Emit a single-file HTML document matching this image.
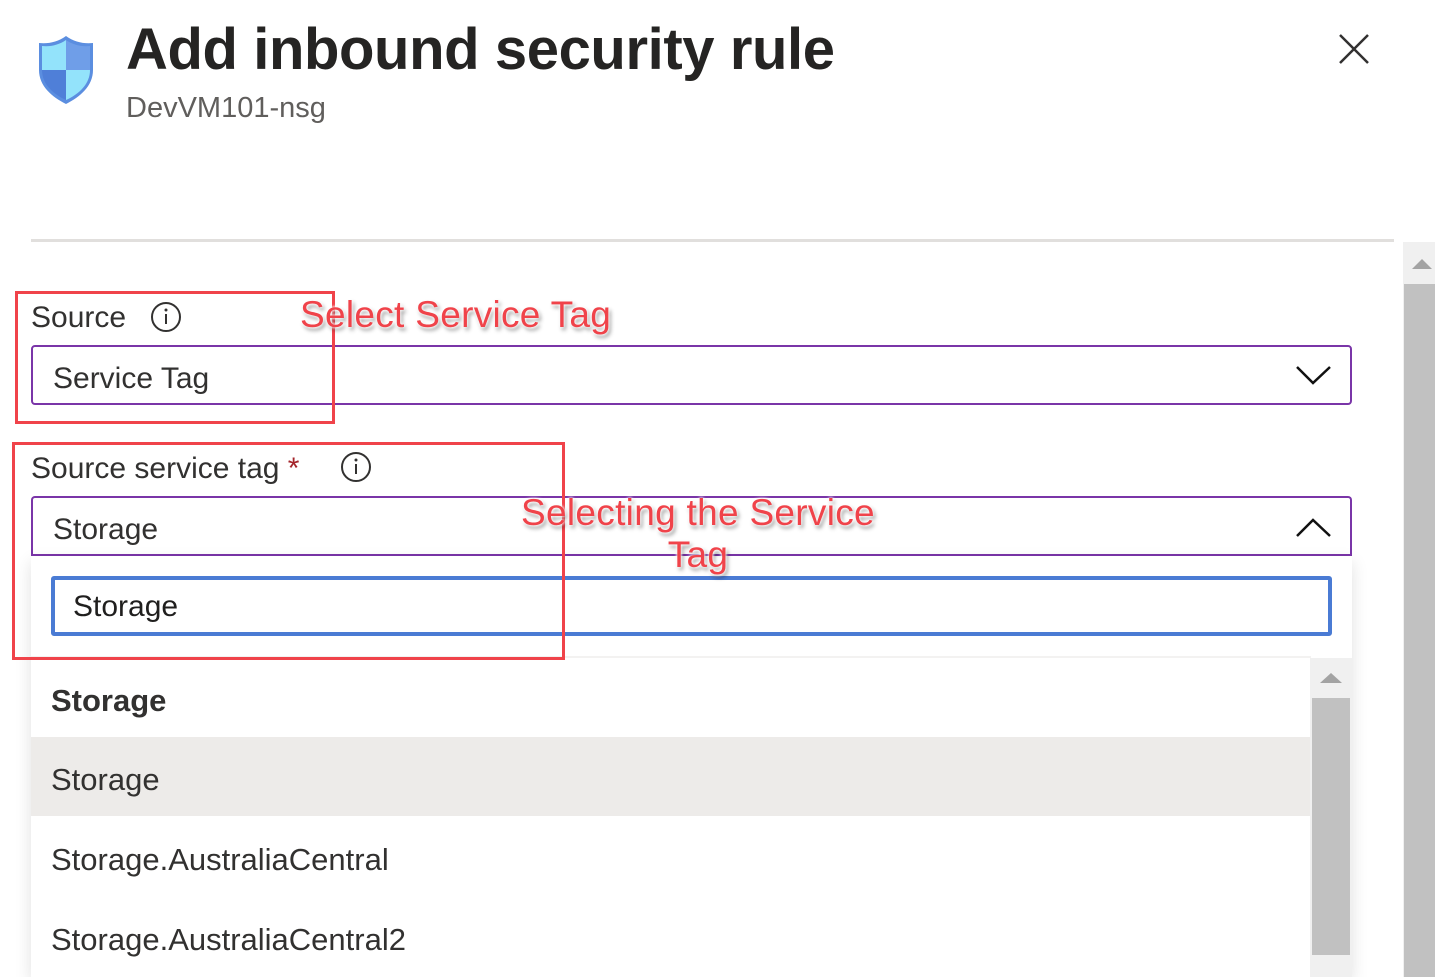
<!DOCTYPE html>
<html><head><meta charset="utf-8"><style>
*{margin:0;padding:0;box-sizing:border-box}
body{width:1435px;height:977px;overflow:hidden;background:#fff;font-family:"Liberation Sans",sans-serif;color:#323130;position:relative}
.a{position:absolute}
.lbl{font-size:30px;color:#323130}
.box{border:2px solid #7a35a8;border-radius:4px}
.red{border:3px solid #f0434a}
.ann{color:#f0434a;font-size:37px;text-shadow:0 0 3px #fff,0 0 3px #fff,2px 3px 4px rgba(0,0,0,.45);letter-spacing:0.3px;text-align:center;line-height:42px}
.item{font-size:31px;color:#323130;left:51px}
</style></head><body>
<svg class="a" style="left:36px;top:34px" width="60" height="72" viewBox="0 0 60 72">
<path d="M30 2 C22 8 12 10 3 9 L3 36 C3 52 16 63 30 70 C44 63 57 52 57 36 L57 9 C48 10 38 8 30 2Z" fill="#5b8ee0"/>
<path d="M30 6 C23 11 14 13 6 12 L6 36 L30 36Z" fill="#93e3fb"/>
<path d="M30 36 L54 36 C54 50 43 60 30 66Z" fill="#93e3fb"/>
<path d="M30 6 C37 11 46 13 54 12 L54 36 L30 36Z" fill="#6f9ee8"/>
<path d="M6 36 L30 36 L30 66 C17 60 6 50 6 36Z" fill="#4f7fd8"/>
</svg>
<div class="a" style="left:126px;top:16px;font-size:58px;font-weight:bold;color:#252423;letter-spacing:-0.4px">Add inbound security rule</div>
<div class="a" style="left:126px;top:92px;font-size:29px;color:#605e5c">DevVM101-nsg</div>
<svg class="a" style="left:1338px;top:33px" width="32" height="32"><path d="M2 2L30 30M30 2L2 30" stroke="#323130" stroke-width="2.5"/></svg>
<div class="a" style="left:31px;top:239px;width:1363px;height:3px;background:#e1dfdd"></div>
<div class="a" style="left:1403px;top:242px;width:32px;height:735px;background:#f0f0f0"></div>
<div class="a" style="left:1404px;top:284px;width:31px;height:693px;background:#c1c1c1"></div>
<svg class="a" style="left:1412px;top:258px" width="20" height="12"><path d="M0 11L10 1L20 11Z" fill="#a3a3a3"/></svg>

<div class="a lbl" style="left:31px;top:301px">Source</div>
<svg class="a" style="left:150px;top:301px" width="32" height="32"><circle cx="16" cy="16" r="14" fill="none" stroke="#323130" stroke-width="2"/><path d="M16 13v10" stroke="#323130" stroke-width="2"/><circle cx="16" cy="9" r="1.5" fill="#323130"/></svg>
<div class="a box" style="left:31px;top:345px;width:1321px;height:60px"></div>
<div class="a lbl" style="left:53px;top:362px">Service Tag</div>
<svg class="a" style="left:1296px;top:365px" width="36" height="22"><path d="M1 2L17 18L34 2" fill="none" stroke="#111" stroke-width="2.5"/></svg>

<div class="a lbl" style="left:31px;top:452px">Source service tag <span style="color:#a4262c">*</span></div>
<svg class="a" style="left:340px;top:451px" width="32" height="32"><circle cx="16" cy="16" r="14" fill="none" stroke="#323130" stroke-width="2"/><path d="M16 13v10" stroke="#323130" stroke-width="2"/><circle cx="16" cy="9" r="1.5" fill="#323130"/></svg>
<div class="a box" style="left:31px;top:496px;width:1321px;height:60px;border-bottom:none;border-radius:4px 4px 0 0"></div>
<div class="a" style="left:31px;top:554px;width:1321px;height:2px;background:#7a35a8"></div>
<div class="a lbl" style="left:53px;top:513px">Storage</div>
<svg class="a" style="left:1296px;top:516px" width="36" height="22"><path d="M1 20L17 4L34 20" fill="none" stroke="#111" stroke-width="2.5"/></svg>

<div class="a" style="left:31px;top:556px;width:1321px;height:421px;background:#fff;box-shadow:0 6px 16px rgba(0,0,0,.12)"></div>
<div class="a" style="left:51px;top:576px;width:1281px;height:60px;border:4px solid #4a7bd4;border-radius:3px"></div>
<div class="a lbl" style="left:73px;top:590px;color:#201f1e">Storage</div>
<div class="a" style="left:31px;top:656px;width:1280px;height:2px;background:#f3f2f1"></div>
<div class="a item" style="top:683px;font-weight:bold">Storage</div>
<div class="a" style="left:31px;top:737px;width:1279px;height:79px;background:#edebe9"></div>
<div class="a item" style="top:762px">Storage</div>
<div class="a item" style="top:842px">Storage.AustraliaCentral</div>
<div class="a item" style="top:922px">Storage.AustraliaCentral2</div>
<div class="a" style="left:1310px;top:658px;width:42px;height:319px;background:#f0f0f0"></div>
<div class="a" style="left:1312px;top:698px;width:38px;height:257px;background:#c1c1c1"></div>
<svg class="a" style="left:1320px;top:672px" width="22" height="12"><path d="M0 11L11 1L22 11Z" fill="#a3a3a3"/></svg>

<div class="a red" style="left:15px;top:291px;width:320px;height:133px"></div>
<div class="a red" style="left:12px;top:442px;width:553px;height:218px"></div>
<div class="a ann" style="left:300px;top:294px">Select Service Tag</div>
<div class="a ann" style="left:515px;top:492px;width:366px">Selecting the Service Tag</div>
</body></html>
